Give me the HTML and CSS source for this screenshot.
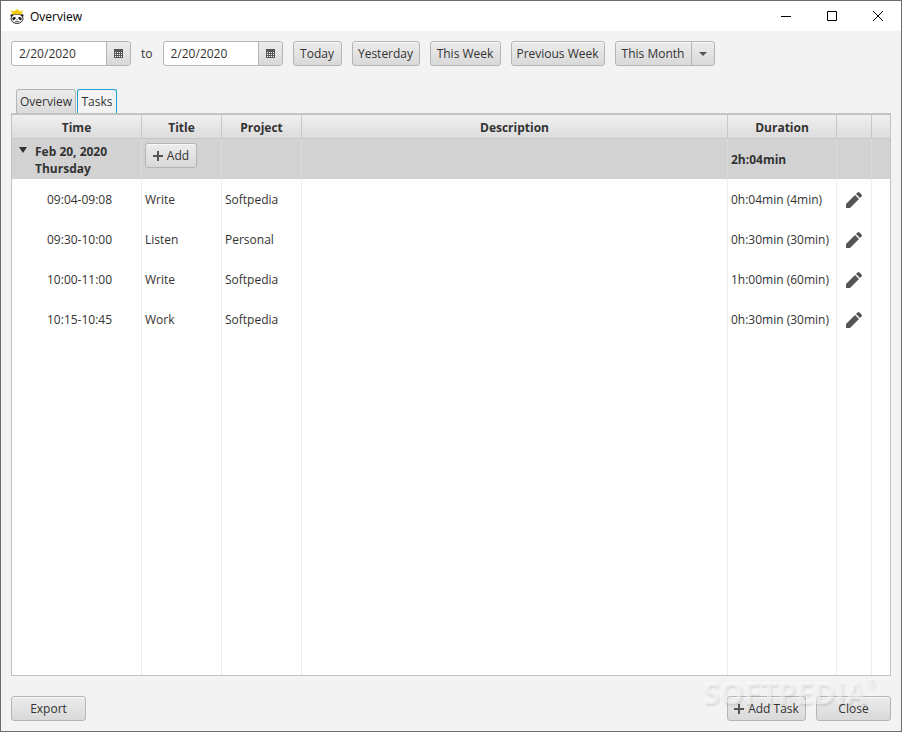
FILE: index.html
```html
<!DOCTYPE html>
<html lang="en">
<head>
<meta charset="utf-8">
<title>Overview</title>
<link rel="stylesheet" href="styles.css">
</head>
<body>
<svg class="defs" aria-hidden="true">
  <symbol id="pencil" viewBox="0 0 16 16">
    <path d="M0 16v-4L9 3l4 4-9 9z"/>
    <path d="M10 2l1.500-1.500q1-.9 2 0l2 2q.9 1 0 2L14 6z"/>
  </symbol>
  <symbol id="plus" viewBox="0 0 10 10">
    <path d="M4 0h2v4h4v2H6v4H4V6H0V4h4z"/>
  </symbol>
  <symbol id="calendar" viewBox="0 0 9 9">
    <path d="M0 0h9v9H0z"/>
    <path d="M1 3h1v1H1zM3 3h1v1H3zM5 3h1v1H5zM7 3h1v1H7zM1 5h1v1H1zM3 5h1v1H3zM5 5h1v1H5zM7 5h1v1H7zM1 7h1v1H1zM3 7h1v1H3zM5 7h1v1H5zM7 7h1v1H7z" fill="#fff"/>
  </symbol>
</svg>

<div class="window">
  <header class="titlebar">
    <svg class="logo" viewBox="0 0 14 15">
      <circle cx="2" cy="6.500" r="1.500" fill="#222"/>
      <circle cx="12" cy="6.500" r="1.500" fill="#222"/>
      <ellipse cx="7" cy="9.700" rx="6" ry="4.700" fill="#fff" stroke="#222"/>
      <path d="M2.200 9.500q1-1.800 3.300-1.300l.3 1.300-2.300 2q-1.300-.4-1.300-2zM11.800 9.500q-1-1.800-3.300-1.300l-.3 1.300 2.300 2q1.300-.4 1.300-2z" fill="#222"/>
      <path d="M6 10.500h2l-1 1zM5 12.300h4v.7H5z" fill="#333"/>
      <path d="M1 1l3 1.500L7 0l3 2.500L13 1l-1.500 4.500q-4.500-1-9 0z" fill="#f5c800"/>
    </svg>
    <h1>Overview</h1>
    <button class="win" aria-label="Minimize"><svg viewBox="0 0 12 12"><path d="M1 6.500h10"/></svg></button>
    <button class="win" aria-label="Maximize"><svg viewBox="0 0 12 12"><path d="M1.500 1.500h9v9h-9z"/></svg></button>
    <button class="win" aria-label="Close window"><svg viewBox="0 0 12 12"><path d="M1 1l10 10M11 1L1 11"/></svg></button>
  </header>

  <div class="toolbar">
    <div class="date">
      <input type="text" id="from" value="2/20/2020" aria-label="From">
      <button aria-label="Pick start date"><svg><use href="#calendar"/></svg></button>
    </div>
    <label for="until">to</label>
    <div class="date">
      <input type="text" id="until" value="2/20/2020">
      <button aria-label="Pick end date"><svg><use href="#calendar"/></svg></button>
    </div>
    <button class="btn today">Today</button>
    <button class="btn yesterday">Yesterday</button>
    <button class="btn week">This Week</button>
    <button class="btn previous">Previous Week</button>
    <div class="split">
      <button class="btn month">This Month</button>
      <button class="btn more" aria-label="More ranges"><svg viewBox="0 0 8 4"><path d="M0 0h8L4 4z"/></svg></button>
    </div>
  </div>

  <div class="tabs" role="tablist">
    <button class="tab" role="tab" aria-selected="false">Overview</button>
    <button class="tab active" role="tab" aria-selected="true">Tasks</button>
  </div>

  <main class="panel">
    <table>
      <colgroup>
        <col class="c-time"><col class="c-title"><col class="c-project"><col>
        <col class="c-duration"><col class="c-edit"><col class="c-end">
      </colgroup>
      <thead>
        <tr><th>Time</th><th>Title</th><th>Project</th><th>Description</th><th>Duration</th><th></th><th></th></tr>
      </thead>
      <tbody>
        <tr class="group">
          <td><div class="day"><svg viewBox="0 0 8 6"><path d="M0 0h8L4 6z"/></svg><span>Feb 20, 2020<br>Thursday</span></div></td>
          <td class="action"><button class="btn add"><svg><use href="#plus"/></svg>Add</button></td>
          <td></td><td></td><td>2h:04min</td><td></td><td></td>
        </tr>
        <tr class="task">
          <td>09:04-09:08</td><td>Write</td><td>Softpedia</td><td></td><td>0h:04min (4min)</td>
          <td><button class="edit" aria-label="Edit"><svg><use href="#pencil"/></svg></button></td><td></td>
        </tr>
        <tr class="task">
          <td>09:30-10:00</td><td>Listen</td><td>Personal</td><td></td><td>0h:30min (30min)</td>
          <td><button class="edit" aria-label="Edit"><svg><use href="#pencil"/></svg></button></td><td></td>
        </tr>
        <tr class="task">
          <td>10:00-11:00</td><td>Write</td><td>Softpedia</td><td></td><td>1h:00min (60min)</td>
          <td><button class="edit" aria-label="Edit"><svg><use href="#pencil"/></svg></button></td><td></td>
        </tr>
        <tr class="task">
          <td>10:15-10:45</td><td>Work</td><td>Softpedia</td><td></td><td>0h:30min (30min)</td>
          <td><button class="edit" aria-label="Edit"><svg><use href="#pencil"/></svg></button></td><td></td>
        </tr>
        <tr class="rest"><td></td><td></td><td></td><td></td><td></td><td></td><td></td></tr>
      </tbody>
    </table>
  </main>

  <footer class="actions">
    <button class="btn wide">Export</button>
    <button class="btn task-add"><svg><use href="#plus"/></svg>Add Task</button>
    <button class="btn wide">Close</button>
    <span class="watermark">SOFTPEDIA<sup>®</sup></span>
  </footer>
</div>
</body>
</html>
```

FILE: styles.css
```css
* { box-sizing: border-box; }

body {
  margin: 0;
  font: 12px/17px "Open Sans", "Noto Sans", sans-serif;
  color: #333;
}

button, input {
  font: inherit;
  color: inherit;
}

button {
  padding: 0;
  border: 0;
  background: none;
  white-space: nowrap;
}

.defs {
  display: none;
}

.window {
  display: flex;
  flex-direction: column;
  min-height: 100vh;
  border: 1px solid #6d6d6d;
  background: #f3f3f3;
}

/* title bar */

.titlebar {
  display: flex;
  align-items: center;
  height: 30px;
  padding-left: 9px;
  background: #fff;
  color: #000;
}

.titlebar h1 {
  flex: 1;
  margin: 0 0 0 6px;
  font-size: 12px;
  font-weight: normal;
}

.logo {
  width: 14px;
  height: 15px;
}

.win {
  display: flex;
  align-items: center;
  justify-content: center;
  width: 46px;
  height: 30px;
}

.win svg {
  width: 12px;
  height: 12px;
  fill: none;
  stroke: #000;
}

/* buttons */

.btn {
  display: flex;
  align-items: center;
  justify-content: center;
  gap: 4px;
  height: 25px;
  border: 1px solid #b5b5b5;
  border-radius: 3px;
  background: linear-gradient(#ececec, #d9d9d9);
  box-shadow: inset 0 1px #f8f8f8;
}

.btn svg {
  width: 10px;
  height: 10px;
  fill: #555;
}

.today { width: 49px; }
.yesterday { width: 68px; }
.week { width: 71px; }
.previous { width: 94px; }
.month { width: 77px; }
.more { width: 24px; }
.add { width: 52px; }
.task-add { width: 79px; }
.wide { width: 75px; }

/* toolbar */

.toolbar {
  display: flex;
  align-items: center;
  gap: 10px;
  padding: 10px;
}

.date {
  display: flex;
  width: 120px;
  height: 25px;
  border: 1px solid #b5b5b5;
  border-radius: 3px;
  background: #fff;
  overflow: hidden;
}

.date input {
  flex: 1;
  min-width: 0;
  padding: 0 7px;
  border: 0;
  background: none;
}

.date button {
  display: flex;
  align-items: center;
  justify-content: center;
  width: 24px;
  border-left: 1px solid #b5b5b5;
  background: linear-gradient(#ececec, #d9d9d9);
}

.date svg {
  width: 9px;
  height: 9px;
  fill: #555;
}

.split {
  display: flex;
}

.split .month {
  border-radius: 3px 0 0 3px;
}

.split .more {
  margin-left: -1px;
  border-radius: 0 3px 3px 0;
}

.more svg {
  width: 8px;
  height: 4px;
}

/* tabs */

.tabs {
  display: flex;
  gap: 1px;
  margin-top: 13px;
  padding: 0 15px;
}

.tab {
  width: 60px;
  height: 24px;
  border: 1px solid #b5b5b5;
  border-bottom: 0;
  border-radius: 3px 3px 0 0;
  background: linear-gradient(#ececec, #dadada);
}

.tab.active {
  width: 40px;
  border-color: #1ba1cf;
  background: #f3f3f3;
}

/* table */

.panel {
  display: grid;
  flex: 1;
  margin: 0 10px;
  border: 1px solid #c3c3c3;
  border-top-width: 2px;
  background: #fff;
}

table {
  width: 100%;
  height: 100%;
  table-layout: fixed;
  border-collapse: separate;
  border-spacing: 0;
}

.c-time { width: 130px; }
.c-title, .c-project { width: 80px; }
.c-duration { width: 109px; }
.c-edit { width: 35px; }
.c-end { width: 18px; }

th {
  height: 24px;
  padding: 2px 0 0;
  border-right: 1px solid #c8c8c8;
  border-bottom: 1px solid #c8c8c8;
  background: linear-gradient(#f0f0f0, #dcdcdc);
}

td {
  padding: 0 3px;
  border-right: 1px solid #ededed;
}

th:last-child, td:last-child {
  border-right: 0;
}

.group {
  height: 40px;
  background: #d2d2d2;
  font-weight: bold;
}

.group td {
  padding-top: 1px;
  border-color: #dcdcdc;
}

.group .btn {
  font-weight: normal;
}

.group .action {
  padding-bottom: 8px;
}

.day {
  display: flex;
  align-items: flex-start;
  gap: 8px;
  padding: 1px 0 0 4px;
}

.day svg {
  width: 8px;
  height: 6px;
  margin-top: 4px;
  fill: #333;
}

.task {
  height: 40px;
}

.task td {
  padding-top: 1px;
}

.task td:first-child {
  padding-left: 35px;
}

.edit {
  display: flex;
  margin: 0 auto;
}

.edit svg {
  width: 16px;
  height: 16px;
  fill: #555;
}

/* bottom row */

.actions {
  position: relative;
  display: flex;
  gap: 10px;
  padding: 20px 10px 10px;
}

.actions .task-add {
  margin-left: auto;
}

.watermark {
  position: absolute;
  right: 25px;
  top: 0;
  font: bold 30px/34px "Open Sans", sans-serif;
  color: rgba(255, 255, 255, 0.5);
  text-shadow: 1px 2px 2px rgba(0, 0, 0, 0.1);
  pointer-events: none;
}

.watermark sup {
  font-size: 12px;
  line-height: 14px;
  vertical-align: top;
}
```
